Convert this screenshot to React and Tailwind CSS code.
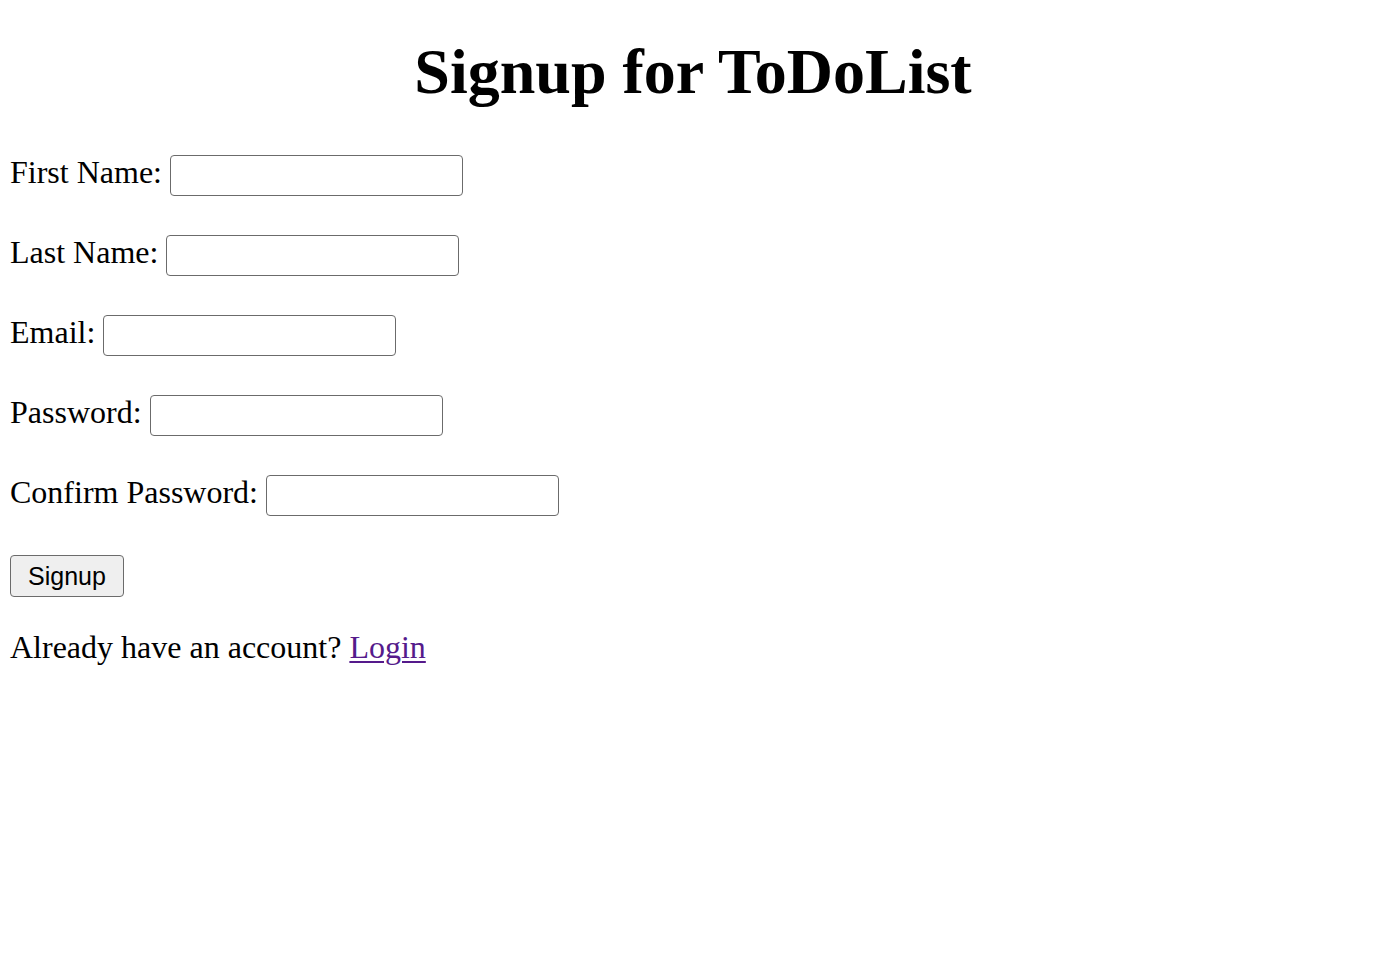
import React from 'react';

const fields = [
  { id: 'firstName', label: 'First Name:', type: 'text' },
  { id: 'lastName', label: 'Last Name:', type: 'text' },
  { id: 'email', label: 'Email:', type: 'email' },
  { id: 'password', label: 'Password:', type: 'password' },
  { id: 'confirmPassword', label: 'Confirm Password:', type: 'password' },
];

const App = () => {
  return (
    <div className="min-h-screen bg-white px-[10px] text-black font-['Liberation_Serif','Times_New_Roman',serif]">
      <h1 className="pt-[36px] text-center text-[64px] font-bold leading-[72px]">Signup for ToDoList</h1>

      <form className="mt-[47px] flex flex-col gap-[39px]" onSubmit={(e) => e.preventDefault()}>
        {fields.map((field) => (
          <div key={field.id} className="flex h-[41px] items-start gap-2">
            <label htmlFor={field.id} className="text-[32px] leading-[34px]">
              {field.label}
            </label>
            <input
              id={field.id}
              type={field.type}
              className="h-[41px] w-[293px] rounded-[4px] border border-[#6b6b6b] bg-white px-2 text-[22px] font-['Liberation_Sans',Arial,sans-serif] outline-none"
            />
          </div>
        ))}

        <div className="flex">
          <button
            type="submit"
            className="h-[42px] w-[114px] rounded-[4px] border border-[#6b6b6b] bg-[#efefef] text-[25px] leading-none text-black font-['Liberation_Sans',Arial,sans-serif]"
          >
            Signup
          </button>
        </div>
      </form>

      {/* Footer link */}
      <p className="mt-[33px] text-[32px] leading-[34px]">
        Already have an account?{' '}
        <a href="#" className="text-[#551a8b] underline decoration-[2px] underline-offset-[3px]">
          Login
        </a>
      </p>
    </div>
  );
};

export default App;
